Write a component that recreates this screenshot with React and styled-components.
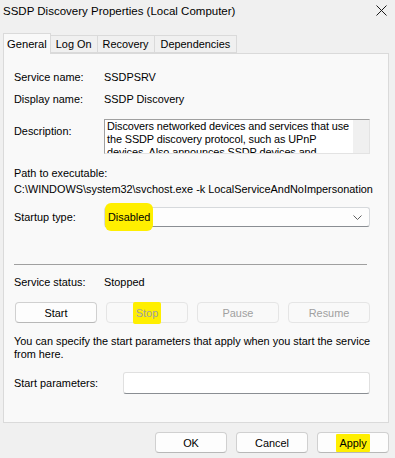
import React from 'react';
import styled, { createGlobalStyle } from 'styled-components';

const Global = createGlobalStyle`
  html, body { margin: 0; padding: 0; }
  body {
    background: #f0f0f0;
    font-family: "Liberation Sans", Arial, sans-serif;
    font-size: 10.9px;
    color: #000;
  }
`;

const Window = styled.div`
  width: 395px;
  height: 458px;
  display: flex;
  flex-direction: column;
  background: #f0f0f0;
  overflow: hidden;
`;

const TitleBar = styled.div`
  height: 21px;
  display: flex;
  align-items: center;
  justify-content: space-between;
  padding: 0 8px 0 3px;
  font-size: 11.5px;
`;

const TabRow = styled.div`
  display: flex;
  align-items: flex-end;
  margin: 11px 0 0 3px;
  height: 21px;
`;

const Tab = styled.div`
  height: ${p => (p.active ? 21 : 18)}px;
  padding: 0 ${p => p.pad}px;
  display: flex;
  align-items: center;
  background: ${p => (p.active ? '#f9f9f9' : '#f0f0f0')};
  border-top: 1px solid #dadada;
  border-right: 1px solid #dadada;
  border-bottom: ${p => (p.active ? 'none' : '1px solid #dadada')};
  border-left: ${p => (p.first ? '1px solid #dadada' : 'none')};
  box-sizing: border-box;
  position: relative;
  z-index: ${p => (p.active ? 2 : 1)};
  margin-bottom: ${p => (p.active ? -1 : 0)}px;
  font-size: ${p => (p.active ? 11.2 : 10.9)}px;
`;

const Panel = styled.div`
  margin: 0 6px 0 3px;
  height: 370px;
  box-sizing: border-box;
  background: #f9f9f9;
  border: 1px solid #dadada;
  display: flex;
  flex-direction: column;
  padding: 0 0 0 10px;
`;

const Row = styled.div`
  display: grid;
  grid-template-columns: ${p => p.label || 90}px 1fr;
  align-items: ${p => p.align || 'center'};
  margin-top: ${p => p.top}px;
  width: 356px;
  line-height: 16px;
`;

const Text = styled.div`
  margin-top: ${p => p.top || 0}px;
  line-height: ${p => p.lh || 16}px;
  white-space: ${p => (p.wrap ? 'normal' : 'nowrap')};
  width: ${p => (p.wrap ? '366px' : 'auto')};
`;

const DescBox = styled.div`
  height: 35px;
  box-sizing: border-box;
  display: flex;
  background: #fff;
  border: 1px solid #a0a0a0;
  border-right-color: #e3e3e3;
  border-bottom-color: #e3e3e3;
  overflow: hidden;
`;

const DescText = styled.div`
  flex: 1;
  padding: 0 0 0 2px;
  line-height: 13px;
  letter-spacing: -0.1px;
  white-space: nowrap;
  overflow: hidden;
`;

const ScrollTrack = styled.div`
  width: 16px;
  background: #f0f0f0;
`;

const Combo = styled.div`
  height: 20px;
  box-sizing: border-box;
  background: #fdfdfd;
  border: 1px solid #d6d9dc;
  border-bottom-color: #8a8e93;
  border-radius: 3px;
  display: flex;
  align-items: center;
  justify-content: space-between;
  padding: 0 7px 0 3px;
`;

const Mark = styled.span`
  background: #ffef00;
  border-radius: ${p => p.r || 4}px;
  padding: ${p => p.v}px ${p => p.h}px;
  margin: 0 -${p => p.h}px;
`;

const Separator = styled.div`
  height: 1px;
  width: 353px;
  background: #a0a0a0;
  margin-top: 37px;
`;

const ButtonGrid = styled.div`
  display: grid;
  grid-template-columns: repeat(4, 82px);
  column-gap: 9px;
  margin: 12px 0 0 1px;
`;

const Button = styled.div`
  height: 21px;
  width: ${p => p.w || 'auto'};
  box-sizing: border-box;
  display: flex;
  align-items: center;
  justify-content: center;
  border-radius: 4px;
  border: 1px solid ${p => (p.disabled ? '#e5e5e5' : '#d0d0d0')};
  border-bottom-color: ${p => (p.disabled ? '#e5e5e5' : '#b8b8b8')};
  background: ${p => (p.disabled ? '#f9f9f9' : '#fdfdfd')};
  color: ${p => (p.disabled ? '#a0a0a0' : '#000')};
`;

const Input = styled.div`
  height: 22px;
  box-sizing: border-box;
  background: #fff;
  border: 1px solid #e0e0e0;
  border-bottom-color: #8a8e93;
  border-radius: 3px;
`;

const Footer = styled.div`
  display: flex;
  justify-content: flex-end;
  gap: 9px;
  margin: 9px 6px 0 0;
`;

const Close = () => (
  <svg width="11" height="11" viewBox="0 0 11 11">
    <path d="M0.5 0.5 L10.5 10.5 M10.5 0.5 L0.5 10.5" stroke="#1a1a1a" strokeWidth="1" fill="none" />
  </svg>
);

const Chevron = () => (
  <svg width="9" height="5" viewBox="0 0 9 5">
    <path d="M0.5 0.5 L4.5 4.5 L8.5 0.5" stroke="#606060" strokeWidth="1" fill="none" />
  </svg>
);

export default function App() {
  return (
    <Window>
      <Global />
      <TitleBar>
        <span>SSDP Discovery Properties (Local Computer)</span>
        <Close />
      </TitleBar>
      <TabRow>
        <Tab active first pad={3}>General</Tab>
        <Tab pad={5}>Log On</Tab>
        <Tab pad={5}>Recovery</Tab>
        <Tab pad={6}>Dependencies</Tab>
      </TabRow>
      <Panel>
        <Row top={15}>
          <span>Service name:</span>
          <span>SSDPSRV</span>
        </Row>
        <Row top={6}>
          <span>Display name:</span>
          <span>SSDP Discovery</span>
        </Row>
        <Row top={12} align="start">
          <Text top={4}>Description:</Text>
          <DescBox>
            <DescText>
              Discovers networked devices and services that use<br />
              the SSDP discovery protocol, such as UPnP<br />
              devices. Also announces SSDP devices and
            </DescText>
            <ScrollTrack />
          </DescBox>
        </Row>
        <Text top={11}>Path to executable:</Text>
        <Text>C:\WINDOWS\system32\svchost.exe -k LocalServiceAndNoImpersonation</Text>
        <Row top={10}>
          <span>Startup type:</span>
          <Combo>
            <span><Mark v={8} h={3} r={6}>Disabled</Mark></span>
            <Chevron />
          </Combo>
        </Row>
        <Separator />
        <Row top={9}>
          <span>Service status:</span>
          <span>Stopped</span>
        </Row>
        <ButtonGrid>
          <Button>Start</Button>
          <Button disabled><Mark v={5} h={3} r={2}>Stop</Mark></Button>
          <Button disabled>Pause</Button>
          <Button disabled>Resume</Button>
        </ButtonGrid>
        <Text top={12} lh={13} wrap>
          You can specify the start parameters that apply when you start the service from here.
        </Text>
        <Row top={11} label={109}>
          <span>Start parameters:</span>
          <Input />
        </Row>
      </Panel>
      <Footer>
        <Button w="72px">OK</Button>
        <Button w="72px">Cancel</Button>
        <Button w="72px"><Mark v={3} h={3} r={1}>Apply</Mark></Button>
      </Footer>
    </Window>
  );
}
